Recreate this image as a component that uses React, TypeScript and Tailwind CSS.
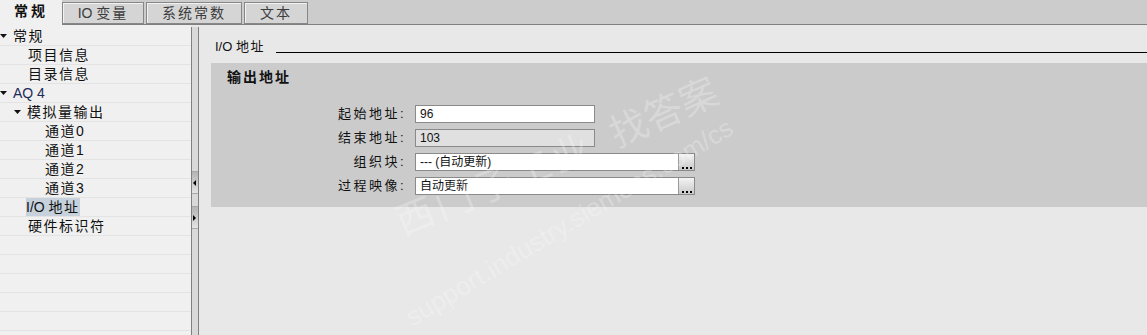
import React from 'react';

const FONT = { fontFamily: '"Liberation Sans", "Noto Sans CJK SC", sans-serif' };

interface TreeRow {
  text?: React.ReactNode;
  pad: number;
  caret?: boolean;
  selected?: boolean;
  latin?: boolean;
}

const rows: TreeRow[] = [
  { text: '常规', pad: 0, caret: true },
  { text: '项目信息', pad: 28 },
  { text: '目录信息', pad: 28 },
  { text: 'AQ 4', pad: 0, caret: true, latin: true },
  { text: '模拟量输出', pad: 14, caret: true },
  { text: '通道0', pad: 45 },
  { text: '通道1', pad: 45 },
  { text: '通道2', pad: 45 },
  { text: '通道3', pad: 45 },
  {
    text: (
      <>
        <span className="tracking-[0px]">I/O </span>地址
      </>
    ),
    pad: 26,
    selected: true,
  },
  { text: '硬件标识符', pad: 28 },
  { pad: 0 },
  { pad: 0 },
  { pad: 0 },
  { pad: 0 },
  { pad: 0 },
];

const Caret = () => (
  <svg width="7" height="4" viewBox="0 0 7 4" className="mr-[6px] shrink-0">
    <path d="M0 0 L7 0 L3.5 4 Z" fill="#111" />
  </svg>
);

const Tab = ({ children, width, gap }: { children: React.ReactNode; width: string; gap?: boolean }) => (
  <div
    className={`${width} ${gap ? 'ml-[2px]' : ''} h-[22px] border border-[#878787] bg-[#d5d5d5] shadow-[inset_1px_1px_0_#f2f2f2] flex items-center justify-center text-[14px] text-[#3c3c3c] tracking-[2px]`}
  >
    {children}
  </div>
);

const Field = ({
  label,
  value,
  wide,
  disabled,
}: {
  label: string;
  value: string;
  wide?: boolean;
  disabled?: boolean;
}) => (
  <div className="flex items-center h-[18px]">
    <div className="w-[204px] pr-[9px] text-right text-[13px] text-[#111] tracking-[2.5px]">{label}</div>
    <div
      className={`${wide ? 'w-[280px]' : 'w-[180px]'} h-[18px] border border-[#8a8a8a] ${
        disabled ? 'bg-[#e0e0e0]' : 'bg-white'
      } flex items-center`}
    >
      <span className="flex-1 pl-[4px] text-[12px] leading-[16px] text-[#111]">{value}</span>
      {wide && (
        <div className="w-[16px] h-full border-l border-[#9a9a9a] bg-gradient-to-b from-[#f4f4f4] to-[#c9c9c9] flex items-end justify-center pb-[1px] gap-[2px]">
          <span className="w-[2px] h-[2px] bg-black" />
          <span className="w-[2px] h-[2px] bg-black" />
          <span className="w-[2px] h-[2px] bg-black" />
        </div>
      )}
    </div>
  </div>
);

export default function App() {
  return (
    <div className="relative w-[1147px] h-[335px] overflow-hidden flex flex-col bg-[#e8e8e8]" style={FONT}>
      {/* tab strip */}
      <div className="h-[25px] flex items-end bg-[#cccccc] shrink-0">
        <div className="w-[62px] h-[25px] bg-[#f0f0f0] flex items-center justify-center pb-[2px] text-[14px] font-bold text-[#111] tracking-[3px]">
          常规
        </div>
        <div className="flex items-end border-b border-[#808080] h-[22px]">
          <Tab width="w-[82px]">
            <span className="tracking-[0px]">IO&nbsp;</span>变量
          </Tab>
          <Tab width="w-[96px]" gap>
            系统常数
          </Tab>
          <Tab width="w-[64px]" gap>
            文本
          </Tab>
        </div>
        <div className="flex-1 h-[1px] bg-[#808080]" />
      </div>

      <div className="flex flex-1 min-h-0">
        {/* tree */}
        <div className="w-[191px] bg-[#f0f0f0] pt-[2px] shrink-0">
          {rows.map((r, i) => (
            <div
              key={i}
              className="h-[19px] border-b border-[#e3e3e3] flex items-center"
              style={{ paddingLeft: r.pad }}
            >
              {r.caret && <Caret />}
              {r.text && (
                <span
                  className={`h-[18px] leading-[18px] text-[14px] ${
                    r.latin ? 'tracking-[0px] text-[#1b2a57] text-[13px]' : 'tracking-[1.5px] text-[#111]'
                  } ${r.selected ? 'bg-[#c6d1dc]' : ''}`}
                >
                  {r.text}
                </span>
              )}
            </div>
          ))}
        </div>

        {/* splitter */}
        <div className="w-[8px] mt-[2px] border-x border-[#808080] bg-[#d9d9d9] flex flex-col shrink-0">
          <div className="h-[144px]" />
          <div className="h-[23px] border-y border-[#a8a8a8] bg-gradient-to-b from-[#b4b4b4] to-[#e4e4e4] flex items-center pl-[1px]">
            <svg width="3" height="6" viewBox="0 0 3 6">
              <path d="M3 0 L0 3 L3 6 Z" fill="#000" />
            </svg>
          </div>
          <div className="h-[12px]" />
          <div className="h-[23px] border-y border-[#a8a8a8] bg-gradient-to-b from-[#b4b4b4] to-[#e4e4e4] flex items-center pl-[1px]">
            <svg width="3" height="6" viewBox="0 0 3 6">
              <path d="M0 0 L3 3 L0 6 Z" fill="#000" />
            </svg>
          </div>
        </div>

        {/* content */}
        <div className="flex-1 bg-[#e8e8e8] pl-[12px] pt-[14px]">
          <div className="flex items-end h-[16px] pl-[4px]">
            <span className="text-[13px] leading-[16px] text-[#111] whitespace-nowrap">
              I/O <span className="tracking-[1.5px]">地址</span>
            </span>
            <div className="flex-1 h-[1px] bg-black ml-[11px] mb-[2px]" />
          </div>

          <div className="mt-[8px] h-[144px] bg-[#cbcbcb] pt-[4px]">
            <div className="pl-[16px] h-[20px] leading-[20px] text-[14px] font-bold text-[#111] tracking-[2px]">
              输出地址
            </div>
            <div className="mt-[18px] flex flex-col gap-[6px]">
              <Field label="起始地址:" value="96" />
              <Field label="结束地址:" value="103" disabled />
              <Field label="组织块:" value="--- (自动更新)" wide />
              <Field label="过程映像:" value="自动更新" wide />
            </div>
          </div>
        </div>
      </div>

      {/* watermark */}
      <div className="pointer-events-none absolute inset-0 select-none">
        <div
          className="absolute left-[398px] top-[196px] text-[38px] text-white/25 tracking-[4px] whitespace-nowrap origin-left"
          style={{ transform: 'rotate(-22deg)' }}
        >
          西门子工业
        </div>
        <div
          className="absolute left-[408px] top-[300px] text-[26px] text-white/25 whitespace-nowrap origin-left"
          style={{ transform: 'rotate(-31deg)' }}
        >
          support.industry.siemens.com/cs
        </div>
        <div
          className="absolute left-[612px] top-[108px] text-[38px] text-white/25 tracking-[0px] whitespace-nowrap origin-left"
          style={{ transform: 'rotate(-24deg)' }}
        >
          找答案
        </div>
      </div>
    </div>
  );
}
